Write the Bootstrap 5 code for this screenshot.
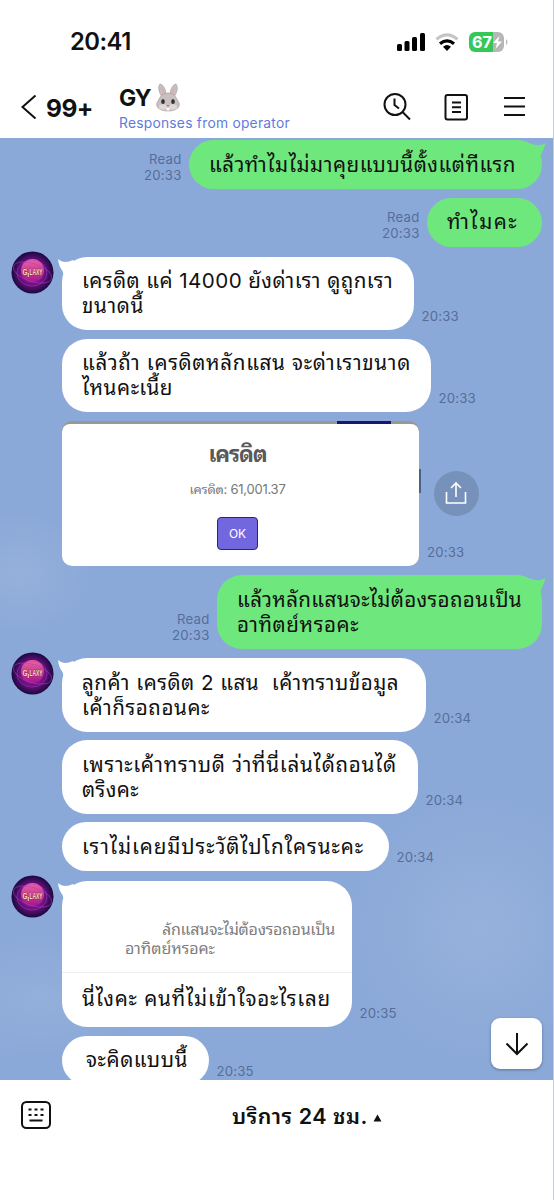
<!DOCTYPE html>
<html lang="th">
<head>
<meta charset="utf-8">
<meta name="viewport" content="width=device-width, initial-scale=1">
<title>GY chat</title>
<link href="https://cdn.jsdelivr.net/npm/bootstrap@5.3.0/dist/css/bootstrap.min.css" rel="stylesheet">
<style>
body{font-family:Inter,"Noto Sans Thai Looped","Noto Sans Thai",Loma,sans-serif;color:#111;width:554px;height:1200px;overflow:hidden}
.phone{height:1200px;border-right:1px solid #c9ccd2}
.statusbar{height:80px;padding:3px 45px 0 70px}
.clock{font-size:23.8px;font-weight:600;line-height:1;letter-spacing:-.5px}
.chathead{height:58px;padding:0 26px 0 21px}
.unread{font-size:24.5px;font-weight:700;line-height:1;letter-spacing:-.5px;margin:16px 0 0 8px}
.peerbox{margin:3px 0 0 26px}
.peer{font-size:23px;font-weight:700;line-height:26px;letter-spacing:-.8px}
.peer-sub{font-size:13.8px;line-height:16px;color:#5f7bdc;margin-top:2px}
.chat{height:942px;padding:2.3px 11px 0;gap:8.7px;overflow:hidden;background:
 radial-gradient(ellipse 130px 130px at 480px 790px,#9ab4dcbb 0,#9ab4dc55 55%,transparent),
 radial-gradient(ellipse 70px 60px at 20px 435px,#9ab4dcaa 0,transparent),
 radial-gradient(ellipse 110px 60px at 40px 860px,#98b3dd99 0,transparent),#8ba9d8}
.chat>*{flex:none}
.turn{margin-top:1px}
.bubble{border-radius:25px;background:#fff;font-size:20.6px;line-height:25px;padding:11.4px 20px 0;height:49px;white-space:nowrap;position:relative}
.bubble.two{height:73.3px}
.mine .bubble{background:#6ee87c}
.ln{display:block;height:25px}
.theirs{padding-left:51px}
.stamp{font-size:13.2px;line-height:16px;letter-spacing:.2px;color:#566d98;margin:0 7.500px 6px}
.avatar{position:absolute;left:0;top:-6px;width:43px;height:43px}
.tail{position:absolute;top:0;width:22px;height:20px}
.theirs .tail{left:-4px}
.mine .tail{right:-5px}
.shot{width:357px;height:145px;border-radius:10px;overflow:hidden;color:#595959;background:linear-gradient(90deg,transparent 275px,#1b1475 275px 329px,transparent 329px) 0 0/100% 4px no-repeat,#9b9792}
.shot-in{height:142px;margin-top:3.5px;padding-right:6px;border-radius:8px 8px 0 0;background:#fff}
.shot-title{font-size:22px;font-weight:700;line-height:26px;margin-top:17px}
.shot-line{font-size:13px;line-height:16px;color:#777;margin-top:14px}
.shot-ok{width:41px;height:33px;border:1.5px solid #30275f;border-radius:4px;background:#7367df;color:#fff;font-size:12px;margin-top:20px}
.share{width:45px;height:45px;background:#7691ba;margin:0 0 28px 14px}
.scrap{width:1.5px;height:24px;background:#4c5f86;margin:0 -1px 73px 0}
.quote{height:92px;border-bottom:1px solid #eee;font-size:16px;line-height:19px;color:#7d7d7d;padding-top:39px}
.quote-a{padding-left:100px;clip-path:polygon(100px 100%,100px 65%,108px -4px,100% -4px,100% 120%,100px 120%)}
.down{position:absolute;right:11px;bottom:11px;width:51px;height:51px;border-radius:9px;background:#fff;box-shadow:0 1px 3px #38507a99}
.foot{height:120px;padding:20px 21px}
.menu-label{font-size:21.5px;font-weight:600;line-height:30px;white-space:nowrap;margin:1.4px 5px 0 181px}
</style>
</head>
<body>
<svg width="0" height="0" class="position-absolute">
<defs>
<radialGradient id="space"><stop offset="0" stop-color="#c32daf"/><stop offset=".6" stop-color="#6a117e"/><stop offset="1" stop-color="#1a0840"/></radialGradient>
<linearGradient id="planet" x2="0" y2="1"><stop stop-color="#f0649c"/><stop offset="1" stop-color="#a6138f"/></linearGradient>
<symbol id="galaxy" viewBox="0 0 43 43"><circle cx="21.5" cy="21.5" r="21" fill="url(#space)"/><circle cx="21.5" cy="19.5" r="11.5" fill="url(#planet)"/><g fill="none" stroke="#a543c5" stroke-width=".5"><ellipse cx="21.5" cy="21.500" rx="20" ry="9" transform="rotate(18 21.5 21.5)"/><ellipse cx="21" cy="22" rx="15" ry="13"/></g><g font-family="Liberation Sans" font-weight="700" font-size="8.5" fill="#f9e0ae" stroke="#5a1a3c" stroke-width=".5" paint-order="stroke"><text x="11.5" y="24" textLength="5" lengthAdjust="spacingAndGlyphs">G</text><text x="18.500" y="24" textLength="13" lengthAdjust="spacingAndGlyphs">LAXY</text></g><path d="M17.300 22v4" stroke="#f4d29e"/></symbol>
<symbol id="tailL" viewBox="0 0 22 20"><path d="M0 2C4 5.500 9 6 15 3L22 10 6 19 4.500 14C2 11 .5 7 0 2Z" fill="#fff"/></symbol>
<symbol id="tailR" viewBox="0 0 22 20"><path d="M20.500 3C17 5 12 6.500 6 3.500L0 10 14 20 16.300 14C18 11 19.500 7 20.500 3Z" fill="#6ee87c"/></symbol>
</defs></svg>
<main class="phone d-flex flex-column bg-white">
<div class="statusbar d-flex align-items-center justify-content-between">
<div class="clock">20:41</div>
<svg width="112" height="22" viewBox="0 0 112 22"><rect x="1" y="13" width="5" height="7" rx="1.5"/><rect x="8.500" y="10" width="5" height="10" rx="1.5"/><rect x="16" y="6" width="5" height="14" rx="1.500"/><rect x="24" y="2" width="5" height="18" rx="1.5"/>
<g fill="none" stroke-width="3.2"><path d="M40.500 8.400Q51 -.5 61.500 8.400" stroke="#c5c5c5"/><path d="M44 12.700Q51 7 58 12.700" stroke="#000"/></g><path d="M47 15.700Q51 12.500 55 15.700L51 20Z"/>
<clipPath id="bat"><rect x="73" y="1" width="35" height="20" rx="6"/></clipPath><g clip-path="url(#bat)"><path d="M73 0h24v22H73z" fill="#36c759"/><path d="M97 0h12v22H97z" fill="#b7b7b7"/></g><path d="M110 8q3 3 0 6z" fill="#b7b7b7"/><text x="76" y="16.800" font-size="16.500" font-weight="700" fill="#fff" textLength="20" lengthAdjust="spacingAndGlyphs">67</text><path d="M103.500 5l-6.500 7h4l-1.500 6 6.500-7.500h-4z" fill="#fff"/></svg>
</div>
<header class="chathead d-flex align-items-start">
<svg style="margin-top:15px" width="17" height="24" viewBox="0 0 17 24" fill="none" stroke="#111" stroke-width="2"><path d="M14.500 .500 1.500 12 14.500 23.500"/></svg>
<div class="unread">99+</div>
<div class="peerbox">
<div class="peer d-flex align-items-center">GY<svg class="ms-1" width="26" height="30" viewBox="0 0 26 30"><g fill="#c9c0c2" stroke="#a0959a" stroke-width=".6"><path d="M7 14C3 8 3 3 5 1c4 1 6 6 6 12M15 13c0-6 2-11 6-12 2 3 2 7-2 13"/><path d="M13 10c6 0 8 4 10 8 4 5-1 10-10 10S-1 23 3 18c2-4 4-8 10-8Z"/></g><path d="M6 4q2 3 3 8M20 4q-2 3-3 8" stroke="#d9adb2" stroke-width="1.600" fill="none"/><ellipse cx="8" cy="18.500" rx="1.800" ry="2.500" fill="#333"/><ellipse cx="18" cy="18.500" rx="1.800" ry="2.500" fill="#333"/><ellipse cx="8.500" cy="24" rx="4.500" ry="2.800" fill="#ded8d9"/><ellipse cx="17.500" cy="24" rx="4.500" ry="2.800" fill="#ded8d9"/><path d="M11 22h4l-2 2z" fill="#c96b81"/><path d="M11.800 25h2.500v2.500h-2.500z" fill="#fff"/></svg></div>
<div class="peer-sub"><span data-w="171">Responses from operator</span></div>
</div>
<svg class="ms-auto" style="margin-top:12px" width="144" height="30" viewBox="0 0 144 30" fill="none" stroke="#111" stroke-width="2"><circle cx="12" cy="12.500" r="10.500"/><path d="M19.500 20 27 27.500M11.500 6.500v6.500L16 16.500"/><rect x="62.500" y="3" width="21.500" height="24.500" rx="2"/><path d="M69 10.500h9M69 15.200h9M69 20h9M121 6h21M121 14.500h21M121 23h21"/></svg>
</header>
<section class="chat d-flex flex-column position-relative">
<div class="mine d-flex justify-content-end align-items-end"><div class="stamp text-end">Read<br>20:33</div><div class="bubble" style="width:353px"><svg class="tail"><use href="#tailR"/></svg><span class="ln"><span data-w="307">แล้วทำไมไม่มาคุยแบบนี้ตั้งแต่ทีแรก</span></span></div></div>
<div class="mine d-flex justify-content-end align-items-end"><div class="stamp text-end">Read<br>20:33</div><div class="bubble" style="width:115px"><span class="ln"><span data-w="71">ทำไมคะ</span></span></div></div>
<div class="theirs turn d-flex align-items-end position-relative"><svg class="avatar"><use href="#galaxy"/></svg><div class="bubble two" style="width:352px"><svg class="tail"><use href="#tailL"/></svg><span class="ln"><span data-w="311">เครดิต แค่ 14000 ยังด่าเรา ดูถูกเรา</span></span><span class="ln"><span data-w="62">ขนาดนี้</span></span></div><div class="stamp">20:33</div></div>
<div class="theirs d-flex align-items-end"><div class="bubble two" style="width:369px"><span class="ln"><span data-w="329">แล้วถ้า เครดิตหลักแสน จะด่าเราขนาด</span></span><span class="ln"><span data-w="91">ไหนคะเนี้ย</span></span></div><div class="stamp">20:33</div></div>
<div class="theirs d-flex align-items-end"><div class="shot"><div class="shot-in d-flex flex-column align-items-center"><div class="shot-title"><span data-w="58">เครดิต</span></div><div class="shot-line"><span data-w="96">เครดิต: 61,001.37</span></div><div class="shot-ok d-flex align-items-center justify-content-center">OK</div></div></div><div class="scrap"></div><div class="d-flex flex-column"><div class="share rounded-circle d-flex align-items-center justify-content-center"><svg width="22" height="24" viewBox="0 0 22 24" fill="none" stroke="#fff" stroke-width="1.600"><path d="M1.500 11v11h19V11M11 16V2M6 7l5-5 5 5"/></svg></div><div class="stamp">20:33</div></div></div>
<div class="mine turn d-flex justify-content-end align-items-end"><div class="stamp text-end">Read<br>20:33</div><div class="bubble two" style="width:325px"><svg class="tail"><use href="#tailR"/></svg><span class="ln"><span data-w="285">แล้วหลักแสนจะไม่ต้องรอถอนเป็น</span></span><span class="ln"><span data-w="122">อาทิตย์หรอคะ</span></span></div></div>
<div class="theirs turn d-flex align-items-end position-relative"><svg class="avatar"><use href="#galaxy"/></svg><div class="bubble two" style="width:364px"><svg class="tail"><use href="#tailL"/></svg><span class="ln"><span data-w="317">ลูกค้า เครดิต 2 แสน&nbsp; เค้าทราบข้อมูล</span></span><span class="ln"><span data-w="128">เค้าก็รอถอนคะ</span></span></div><div class="stamp">20:34</div></div>
<div class="theirs d-flex align-items-end"><div class="bubble two" style="width:356px"><span class="ln"><span data-w="315">เพราะเค้าทราบดี ว่าที่นี่เล่นได้ถอนได้</span></span><span class="ln"><span data-w="57">ตริงคะ</span></span></div><div class="stamp">20:34</div></div>
<div class="theirs d-flex align-items-end"><div class="bubble" style="width:327px"><span class="ln"><span data-w="282">เราไม่เคยมีประวัติไปโกใครนะคะ</span></span></div><div class="stamp">20:34</div></div>
<div class="theirs turn d-flex align-items-end position-relative"><svg class="avatar"><use href="#galaxy"/></svg><div class="bubble p-0" style="width:290px;height:146px"><svg class="tail"><use href="#tailL"/></svg><div class="quote"><div class="quote-a"><span data-w="173">ลักแสนจะไม่ต้องรอถอนเป็น</span></div><div style="padding-left:63px"><span data-w="90">อาทิตย์หรอคะ</span></div></div><span class="ln" style="padding:13px 20px"><span data-w="249">นี่ไงคะ คนที่ไม่เข้าใจอะไรเลย</span></span></div><div class="stamp">20:35</div></div>
<div class="theirs d-flex align-items-end"><div class="bubble" style="width:147px"><span class="ln ps-1"><span data-w="102">จะคิดแบบนี้</span></span></div><div class="stamp">20:35</div></div>
<div class="down d-flex align-items-center justify-content-center"><svg width="24" height="24" viewBox="0 0 24 24" fill="none" stroke="#111" stroke-width="2"><path d="M12 1v21M1.500 11.500 12 22l10.500-10.500"/></svg></div>
</section>
<footer class="foot d-flex align-items-start">
<svg width="30" height="30" viewBox="0 0 30 30" fill="none" stroke="#111" stroke-width="2"><rect x="1" y="2" width="28" height="26" rx="4.500"/><path d="M7.500 9.500h3M13.500 9.500h3M19.500 9.500h3M7.500 15h3M13.500 15h3M19.500 15h3M8.500 20.500h13"/></svg>
<div class="menu-label"><span data-w="136">บริการ 24 ชม.</span></div>
<svg style="margin-top:14px" width="9" height="8" viewBox="0 0 9 8"><path d="M4.500 .500 8.500 7.500H.500Z" fill="#111"/></svg>
</footer>
</main>
<script>
// Letter-space each line so that it fills its intended measure.
document.querySelectorAll('[data-w]').forEach(function (el) {
  var target = +el.dataset.w;
  el.style.letterSpacing = '0.01px';
  var a = el.getBoundingClientRect().width;
  el.style.letterSpacing = '1.01px';
  var b = el.getBoundingClientRect().width;
  el.style.letterSpacing = (0.01 + (target - a) / (b - a)) + 'px';
});
</script>
</body>
</html>
